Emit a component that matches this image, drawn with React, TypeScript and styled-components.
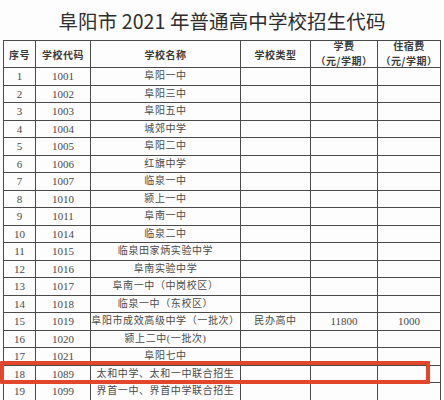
import React from "react";
import styled, { createGlobalStyle } from "styled-components";

const GlobalStyle = createGlobalStyle`
    html, body {
        margin: 0;
        padding: 0;
        background: #fdfdfd;
    }
`;

const Page = styled.div`
    width: 444px;
    height: 400px;
    overflow: hidden;
    padding-left: 3px;
    box-sizing: border-box;
`;

const Title = styled.h1`
    margin: 0;
    height: 40px;
    display: flex;
    align-items: center;
    justify-content: center;
    padding-right: 3px;
    font-family: "Noto Sans CJK SC", "Noto Sans", sans-serif;
    font-weight: 400;
    font-size: 19.5px;
    color: #2e2e2e;
    letter-spacing: 0.1px;
`;

const TableWrap = styled.div`
    position: relative;
    width: 437px;
`;

const Table = styled.table`
    width: 437px;
    border-collapse: collapse;
    table-layout: fixed;
    border: 1.5px solid #3c3c3c;
`;

const Th = styled.th`
    height: 26px;
    padding: 0;
    border: 1px solid #4a4a4a;
    font-family: "Noto Sans CJK SC", sans-serif;
    font-weight: 700;
    font-size: 10px;
    line-height: 13px;
    color: #3a3a3a;
    text-align: center;
    letter-spacing: 0.5px;
`;

const HeadStack = styled.div`
    height: 26px;
    display: flex;
    flex-direction: column;
    justify-content: center;
    align-items: center;
`;

const HeadLine = styled.div`
    flex: none;
    height: 14.6px;
    line-height: 14.6px;
    white-space: nowrap;
`;

const Td = styled.td<{ $cjk?: boolean }>`
    height: 16.5px;
    padding: 0;
    border: 1px solid #4a4a4a;
    font-family: "Liberation Serif", "Noto Sans CJK SC", serif;
    font-size: ${(p) => (p.$cjk ? "10px" : "11px")};
    line-height: 16px;
    color: #4a4a4a;
    text-align: center;
    letter-spacing: ${(p) => (p.$cjk ? "0.6px" : "0")};
    white-space: nowrap;
    overflow: hidden;
`;

const Highlight = styled.div<{ $top: number }>`
    position: absolute;
    left: -3px;
    top: ${(p) => p.$top}px;
    width: 430px;
    height: 23px;
    box-sizing: border-box;
    border: 4px solid #e2472b;
    border-radius: 1px;
    pointer-events: none;
`;

type Row = {
    code: string;
    name: string;
    type?: string;
    fee?: string;
    dorm?: string;
};

const rows: Row[] = [
    { code: "1001", name: "阜阳一中" },
    { code: "1002", name: "阜阳三中" },
    { code: "1003", name: "阜阳五中" },
    { code: "1004", name: "城郊中学" },
    { code: "1005", name: "阜阳二中" },
    { code: "1006", name: "红旗中学" },
    { code: "1007", name: "临泉一中" },
    { code: "1010", name: "颍上一中" },
    { code: "1011", name: "阜南一中" },
    { code: "1014", name: "临泉二中" },
    { code: "1015", name: "临泉田家炳实验中学" },
    { code: "1016", name: "阜南实验中学" },
    { code: "1017", name: "阜南一中（中岗校区）" },
    { code: "1018", name: "临泉一中（东校区）" },
    { code: "1019", name: "阜阳市成效高级中学（一批次）", type: "民办高中", fee: "11800", dorm: "1000" },
    { code: "1020", name: "颍上二中(一批次)" },
    { code: "1021", name: "阜阳七中" },
    { code: "1089", name: "太和中学、太和一中联合招生" },
    { code: "1099", name: "界首一中、界首中学联合招生" },
];

const widths = [32, 55, 150, 70, 67, 63];

const App = () => {
    return (
        <Page>
            <GlobalStyle />
            <Title>阜阳市 2021 年普通高中学校招生代码</Title>
            <TableWrap>
                <Table>
                    <colgroup>
                        {widths.map((w, i) => (
                            <col key={i} style={{ width: w }} />
                        ))}
                    </colgroup>
                    <thead>
                        <tr>
                            <Th>序号</Th>
                            <Th>学校代码</Th>
                            <Th>学校名称</Th>
                            <Th>学校类型</Th>
                            <Th>
                                <HeadStack>
                                    <HeadLine>学费</HeadLine>
                                    <HeadLine>（元/学期）</HeadLine>
                                </HeadStack>
                            </Th>
                            <Th>
                                <HeadStack>
                                    <HeadLine>住宿费</HeadLine>
                                    <HeadLine>（元/学期）</HeadLine>
                                </HeadStack>
                            </Th>
                        </tr>
                    </thead>
                    <tbody>
                        {rows.map((r, i) => (
                            <tr key={r.code}>
                                <Td>{i + 1}</Td>
                                <Td>{r.code}</Td>
                                <Td $cjk>{r.name}</Td>
                                <Td $cjk>{r.type}</Td>
                                <Td>{r.fee}</Td>
                                <Td>{r.dorm}</Td>
                            </tr>
                        ))}
                    </tbody>
                </Table>
                <Highlight $top={321} />
            </TableWrap>
        </Page>
    );
};

export default App;
